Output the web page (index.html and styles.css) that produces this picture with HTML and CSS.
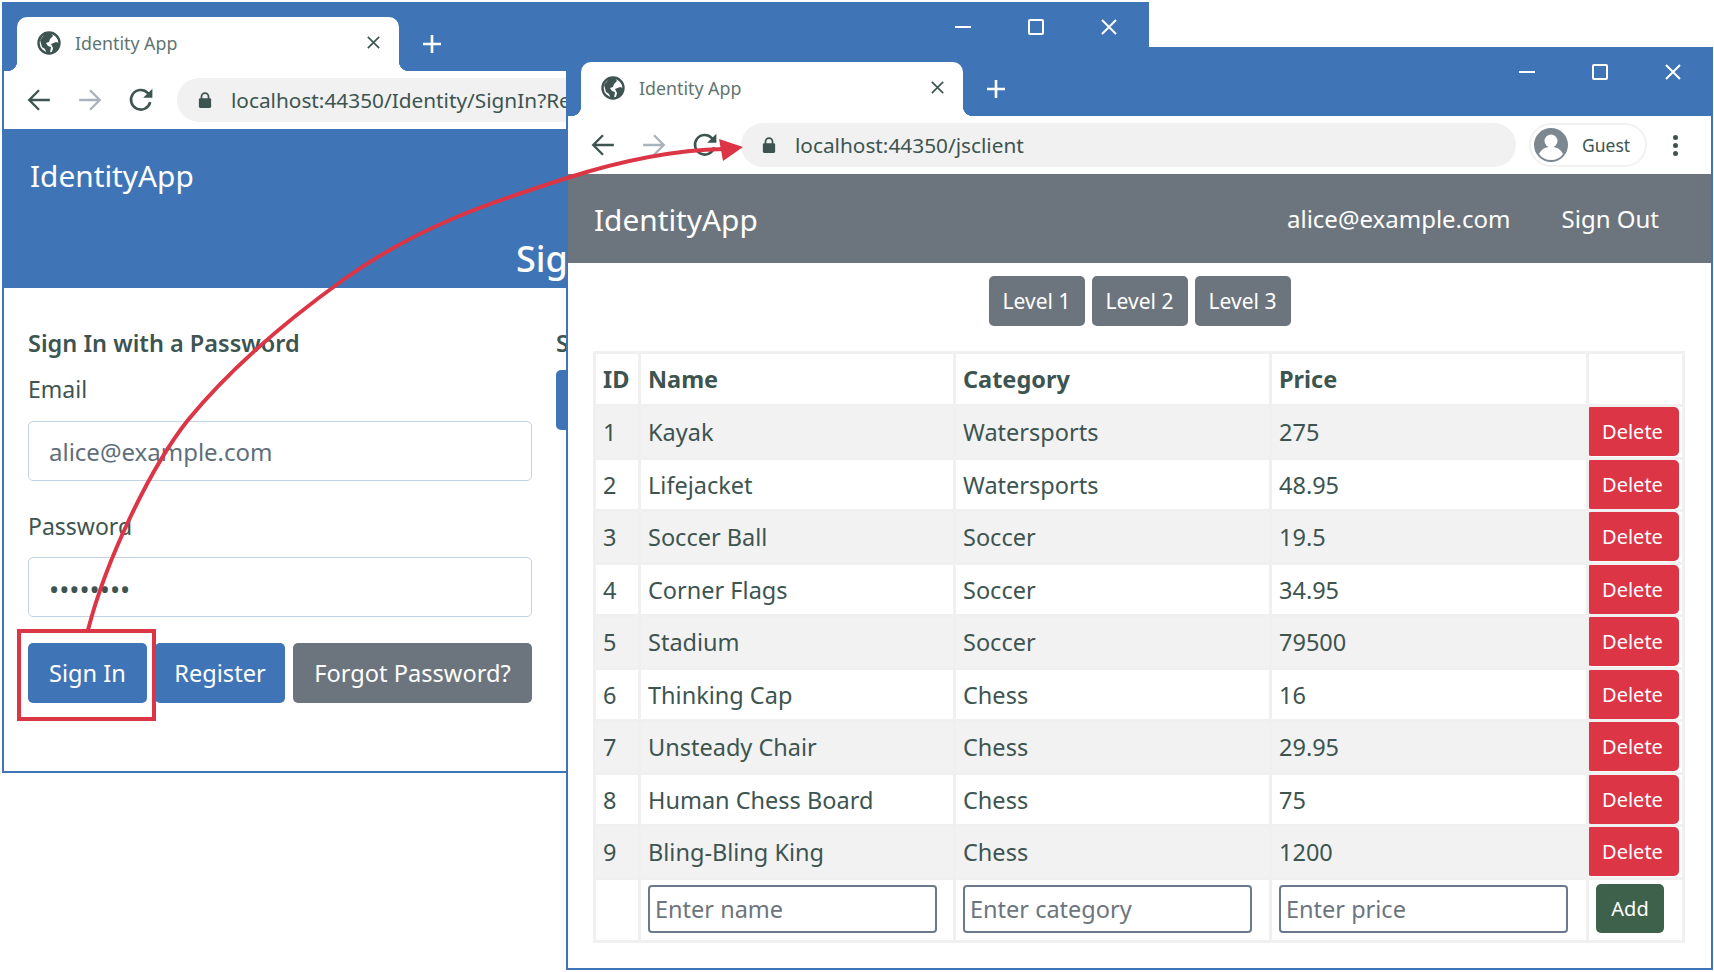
FILE: index.html
```html
<!DOCTYPE html>
<html lang="en">
<head>
  <meta charset="UTF-8" />
  <title>Identity App</title>
  <link rel="stylesheet" href="styles.css">
</head>
<body>

<svg class="defs" width="0" height="0">
  <symbol id="i-globe" viewBox="0 0 24 24">
    <circle cx="12" cy="12" r="10.5" fill="none" stroke="currentColor" stroke-width="2.4"/>
    <path fill="currentColor" d="M3 9l5-6 6-1 2 3-3 3-1 3-3 1 2 3 3 1-1 6-3 1-2-5-3-2zM14 13l5-2 3 1-1 5-4 5-2-1 1-4z"/>
  </symbol>
  <symbol id="i-back" viewBox="0 0 24 24">
    <path fill="none" stroke="currentColor" stroke-width="2.2" d="M22 12H3M12 3l-9 9 9 9"/>
  </symbol>
  <symbol id="i-fwd" viewBox="0 0 24 24">
    <path fill="none" stroke="currentColor" stroke-width="2.2" d="M2 12h19M12 3l9 9-9 9"/>
  </symbol>
  <symbol id="i-reload" viewBox="0 0 24 24">
    <path fill="none" stroke="currentColor" stroke-width="2.4" d="M20.5 14a9 9 0 1 1-2.2-8.4L21 8"/>
    <path fill="currentColor" d="M22.5 1.5v8.5H14z"/>
  </symbol>
  <symbol id="i-lock" viewBox="0 0 16 20">
    <path fill="none" stroke="currentColor" stroke-width="2" d="M4 9V6a4 4 0 0 1 8 0v3"/>
    <rect x="1" y="8" width="14" height="11" rx="1.5" fill="currentColor"/>
  </symbol>
  <symbol id="i-x" viewBox="0 0 16 16">
    <path fill="none" stroke="currentColor" stroke-width="2" d="M1 1l14 14M15 1L1 15"/>
  </symbol>
  <symbol id="i-plus" viewBox="0 0 20 20">
    <path fill="none" stroke="currentColor" stroke-width="2.6" d="M10 1v18M1 10h18"/>
  </symbol>
</svg>

<div class="window window-back">
  <div class="titlebar">
    <div class="tab">
      <svg class="favicon"><use href="#i-globe"/></svg>
      <span class="tab-title">Identity App</span>
      <svg class="tab-close"><use href="#i-x"/></svg>
    </div>
    <svg class="tab-new"><use href="#i-plus"/></svg>
    <div class="win-controls">
      <span class="win-min"></span>
      <span class="win-max"></span>
      <svg class="win-close"><use href="#i-x"/></svg>
    </div>
  </div>
  <div class="toolbar">
    <svg class="nav-icon"><use href="#i-back"/></svg>
    <svg class="nav-icon nav-off"><use href="#i-fwd"/></svg>
    <svg class="nav-icon"><use href="#i-reload"/></svg>
    <div class="address">
      <svg class="lock"><use href="#i-lock"/></svg>
      <span class="url">localhost:44350/Identity/SignIn?Re</span>
    </div>
  </div>
  <div class="banner">
    <div class="brand">IdentityApp</div>
    <h4 class="banner-title">Sign In</h4>
  </div>
  <div class="signin">
    <form class="signin-col">
      <h5 class="signin-head">Sign In with a Password</h5>
      <label class="field-label">Email</label>
      <input class="field" type="text" value="alice@example.com">
      <label class="field-label field-label-2">Password</label>
      <input class="field field-pass" type="password" value="mysecret">
      <div class="signin-btns">
        <button type="button" class="btn btn-blue btn-signin">Sign In</button>
        <button type="button" class="btn btn-blue btn-register">Register</button>
        <button type="button" class="btn btn-gray btn-forgot">Forgot Password?</button>
      </div>
    </form>
    <div class="signin-col">
      <h5 class="signin-head">S</h5>
      <button type="button" class="btn btn-blue btn-ext"></button>
    </div>
  </div>
</div>

<div class="window window-front">
  <div class="titlebar">
    <div class="tab">
      <svg class="favicon"><use href="#i-globe"/></svg>
      <span class="tab-title">Identity App</span>
      <svg class="tab-close"><use href="#i-x"/></svg>
    </div>
    <svg class="tab-new"><use href="#i-plus"/></svg>
    <div class="win-controls">
      <span class="win-min"></span>
      <span class="win-max"></span>
      <svg class="win-close"><use href="#i-x"/></svg>
    </div>
  </div>
  <div class="toolbar">
    <svg class="nav-icon"><use href="#i-back"/></svg>
    <svg class="nav-icon nav-off"><use href="#i-fwd"/></svg>
    <svg class="nav-icon"><use href="#i-reload"/></svg>
    <div class="address">
      <svg class="lock"><use href="#i-lock"/></svg>
      <span class="url">localhost:44350/jsclient</span>
    </div>
    <div class="profile">
      <svg class="avatar" viewBox="0 0 34 34">
        <circle cx="17" cy="17" r="17" fill="#7d8790"/>
        <circle cx="17" cy="13" r="6.5" fill="#fff"/>
        <path fill="#fff" d="M5 26c3-6 7-7 12-7s9 1 12 7c-3 4-7 6-12 6s-9-2-12-6z"/>
      </svg>
      <span class="profile-name">Guest</span>
    </div>
    <div class="kebab"><i></i><i></i><i></i></div>
  </div>
  <div class="navbar">
    <div class="brand">IdentityApp</div>
    <div class="nav-links">
      <span>alice@example.com</span>
      <span>Sign Out</span>
    </div>
  </div>
  <div class="levels">
    <button type="button" class="btn btn-gray btn-level">Level 1</button>
    <button type="button" class="btn btn-gray btn-level">Level 2</button>
    <button type="button" class="btn btn-gray btn-level">Level 3</button>
  </div>
  <table class="products">
    <colgroup>
      <col class="c-id"><col class="c-name"><col class="c-cat"><col class="c-price"><col class="c-act">
    </colgroup>
    <thead>
      <tr><th>ID</th><th>Name</th><th>Category</th><th>Price</th><th></th></tr>
    </thead>
    <tbody>
      <tr><td>1</td><td>Kayak</td><td>Watersports</td><td>275</td><td class="act"><button type="button" class="btn btn-red">Delete</button></td></tr>
      <tr><td>2</td><td>Lifejacket</td><td>Watersports</td><td>48.95</td><td class="act"><button type="button" class="btn btn-red">Delete</button></td></tr>
      <tr><td>3</td><td>Soccer Ball</td><td>Soccer</td><td>19.5</td><td class="act"><button type="button" class="btn btn-red">Delete</button></td></tr>
      <tr><td>4</td><td>Corner Flags</td><td>Soccer</td><td>34.95</td><td class="act"><button type="button" class="btn btn-red">Delete</button></td></tr>
      <tr><td>5</td><td>Stadium</td><td>Soccer</td><td>79500</td><td class="act"><button type="button" class="btn btn-red">Delete</button></td></tr>
      <tr><td>6</td><td>Thinking Cap</td><td>Chess</td><td>16</td><td class="act"><button type="button" class="btn btn-red">Delete</button></td></tr>
      <tr><td>7</td><td>Unsteady Chair</td><td>Chess</td><td>29.95</td><td class="act"><button type="button" class="btn btn-red">Delete</button></td></tr>
      <tr><td>8</td><td>Human Chess Board</td><td>Chess</td><td>75</td><td class="act"><button type="button" class="btn btn-red">Delete</button></td></tr>
      <tr><td>9</td><td>Bling-Bling King</td><td>Chess</td><td>1200</td><td class="act"><button type="button" class="btn btn-red">Delete</button></td></tr>
      <tr class="add-row">
        <td></td>
        <td><input class="cell-input" type="text" placeholder="Enter name"></td>
        <td><input class="cell-input" type="text" placeholder="Enter category"></td>
        <td><input class="cell-input" type="text" placeholder="Enter price"></td>
        <td class="act-add"><button type="button" class="btn btn-green">Add</button></td>
      </tr>
    </tbody>
  </table>
</div>

<!-- callout drawn over both windows -->
<svg class="callout" viewBox="0 0 1714 972">
  <rect x="19" y="631" width="135" height="88" fill="none" stroke="#dc3545" stroke-width="4"/>
  <path fill="none" stroke="#dc3545" stroke-width="4" d="M88 630C106 560 150 468 188 420C233 365 293 316 343 280C418 226 492 202 567 178C620 161 675 150 724 149"/>
  <path fill="#dc3545" d="M743 147L719 139L723 161z"/>
</svg>

</body>
</html>
```

FILE: styles.css
```css
* {
  box-sizing: border-box;
}
html, body {
  margin: 0;
  height: 100%;
  overflow: hidden;
  background: #fff;
}
body {
  position: relative;
  font-family: "Noto Sans", "Open Sans", sans-serif;
  color: #3d5450;
}
.defs {
  position: absolute;
}

/* windows */
.window {
  position: absolute;
  width: 1147px;
  display: flex;
  flex-direction: column;
  overflow: hidden;
  background: #fff;
  border: 2px solid #3f75b7;
}
.window-back {
  left: 2px;
  top: 2px;
  height: 771px;
}
.window-front {
  left: 566px;
  top: 47px;
  height: 923px;
}
.titlebar {
  display: flex;
  align-items: flex-end;
  flex: none;
  height: 67px;
  padding-left: 13px;
  background: #3f75b7;
  color: #fff;
}
.tab {
  position: relative;
  display: flex;
  align-items: center;
  width: 382px;
  height: 54px;
  padding: 0 19px 3px 20px;
  background: #fff;
  border-radius: 10px 10px 0 0;
  color: #3d5450;
}
.tab::before,
.tab::after {
  content: "";
  position: absolute;
  bottom: 0;
  width: 10px;
  height: 10px;
}
.tab::before {
  left: -10px;
  background: radial-gradient(circle at 0 0, #3f75b7 10px, #fff 10.5px);
}
.tab::after {
  right: -10px;
  background: radial-gradient(circle at 100% 0, #3f75b7 10px, #fff 10.5px);
}
.favicon {
  width: 24px;
  height: 24px;
  flex: none;
}
.tab-title {
  margin-left: 14px;
  font-size: 17.8px;
  color: #5f7470;
}
.tab-close {
  width: 13px;
  height: 13px;
  margin-left: auto;
  stroke-width: 3;
}
.tab-new {
  width: 20px;
  height: 20px;
  margin: 13px 0 0 23px;
  align-self: center;
}
.win-controls {
  display: flex;
  align-items: center;
  align-self: flex-start;
  gap: 57px;
  height: 46px;
  margin-left: auto;
  padding-right: 30px;
}
.win-min {
  width: 16px;
  height: 2px;
  background: #fff;
}
.win-max {
  width: 16px;
  height: 16px;
  border: 2px solid #fff;
  border-radius: 2px;
}
.win-close {
  width: 16px;
  height: 16px;
}

/* toolbar */
.toolbar {
  display: flex;
  align-items: center;
  flex: none;
  height: 58px;
  padding-left: 22px;
  background: #fff;
}
.nav-icon {
  width: 26px;
  height: 26px;
  flex: none;
  margin-right: 25px;
  color: #3d5450;
}
.nav-off {
  color: #a9b3bd;
}
.address {
  display: flex;
  align-items: center;
  flex: 1;
  min-width: 0;
  height: 44px;
  margin-left: -2px;
  padding-left: 21px;
  border-radius: 22px;
  background: #f1f1f1;
  white-space: nowrap;
  overflow: hidden;
}
.lock {
  width: 14px;
  height: 18px;
  flex: none;
  color: #3d5450;
}
.url {
  margin-left: 19px;
  font-size: 20.8px;
  color: #3d5450;
}
.profile {
  display: flex;
  align-items: center;
  flex: none;
  width: 118px;
  height: 44px;
  margin-left: 13px;
  padding-left: 3px;
  border: 2px solid #f1f1f1;
  border-radius: 22px;
}
.avatar {
  width: 34px;
  height: 34px;
}
.profile-name {
  margin-left: 14px;
  font-size: 17.5px;
  color: #3d5450;
}
.kebab {
  display: flex;
  flex-direction: column;
  gap: 3px;
  margin: 0 33px 0 26px;
}
.kebab i {
  display: block;
  width: 5px;
  height: 5px;
  border-radius: 50%;
  background: #3d5450;
}

/* page headers */
.banner {
  flex: none;
  height: 159px;
  padding: 27px 26px 0;
  background: #3f75b7;
  color: #fff;
}
.brand {
  font-size: 29.8px;
  line-height: 40px;
}
.banner-title {
  margin: 40px 0 0;
  font-size: 36px;
  line-height: 46px;
  font-weight: 500;
  text-align: center;
}
.navbar {
  display: flex;
  justify-content: space-between;
  align-items: center;
  flex: none;
  height: 89px;
  padding: 0 52px 0 26px;
  background: #6c757d;
  color: #fff;
}
.navbar .brand {
  margin-top: 3px;
}
.nav-links {
  display: flex;
  gap: 51px;
  font-size: 24px;
}

/* buttons */
.btn {
  border: none;
  border-radius: 5px;
  color: #fff;
  font-family: inherit;
  font-size: 23.6px;
  padding: 0;
}
.btn-blue {
  background: #3f75b7;
}
.btn-gray {
  background: #6c757d;
}
.btn-red {
  display: block;
  width: 93px;
  height: 49px;
  margin-left: -3px;
  background: #dc3545;
  font-size: 20px;
}
.btn-green {
  display: block;
  width: 68px;
  height: 49px;
  background: #3d614b;
  font-size: 20px;
}

/* sign in form */
.signin {
  display: grid;
  grid-template-columns: 504px 1fr;
  gap: 24px;
  padding: 39px 24px 0 24px;
}
.signin-head {
  margin: 0;
  font-size: 23.5px;
  line-height: 32px;
  font-weight: 600;
  white-space: nowrap;
}
.field-label {
  display: block;
  margin-top: 14px;
  font-size: 23px;
  line-height: 32px;
}
.field-label-2 {
  margin-top: 29px;
}
.field {
  display: block;
  width: 504px;
  height: 60px;
  margin-top: 16px;
  padding: 0 20px;
  border: 1px solid #c3d3e6;
  border-radius: 5px;
  font-family: inherit;
  font-size: 24px;
  color: #5f6f78;
}
.field-pass {
  margin-top: 15px;
  padding-top: 5px;
  font-size: 27px;
  color: #3d5450;
}
.signin-btns {
  display: flex;
  gap: 8px;
  margin-top: 26px;
}
.signin-btns .btn {
  height: 60px;
}
.btn-signin {
  width: 119px;
}
.btn-register {
  width: 130px;
}
.btn-forgot {
  width: 239px;
}
.btn-ext {
  width: 40px;
  height: 60px;
  margin-top: 11px;
}

/* jsclient page */
.levels {
  display: flex;
  justify-content: center;
  gap: 7px;
  margin-top: 13px;
}
.btn-level {
  width: 96px;
  height: 50px;
  font-size: 21px;
}
.products {
  width: 1089px;
  margin: 25px 0 0 25px;
  border-collapse: collapse;
  table-layout: fixed;
  font-size: 23.5px;
}
.c-id { width: 45px; }
.c-name { width: 315px; }
.c-cat { width: 316px; }
.c-price { width: 317px; }
.c-act { width: 96px; }
.products th,
.products td {
  height: 53px;
  padding: 0 7px;
  border: 3px solid #f0f0f0;
  text-align: left;
  font-weight: 400;
  white-space: nowrap;
}
.products tbody tr:nth-child(even) td {
  height: 52px;
}
.products th {
  font-weight: 700;
}
.products tbody tr:nth-child(odd) {
  background: #f2f2f2;
}
.products .act {
  padding: 0;
  vertical-align: top;
  background: #fff;
}
.products .add-row {
  background: #fff;
}
.products tbody tr.add-row td {
  height: 63px;
  padding-bottom: 3px;
}
.products .act-add {
  padding-left: 7px;
}
.cell-input {
  display: block;
  width: 289px;
  height: 48px;
  padding: 0 5px;
  border: 2px solid #6b7a8a;
  border-radius: 4px;
  font-family: inherit;
  font-size: 23.5px;
}
.cell-input::placeholder {
  color: #6c757d;
}

/* red arrow and box */
.callout {
  position: absolute;
  left: 0;
  top: 0;
  width: 1714px;
  height: 972px;
  pointer-events: none;
}
```
